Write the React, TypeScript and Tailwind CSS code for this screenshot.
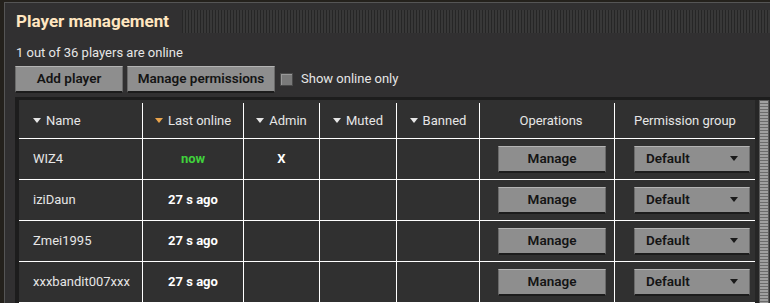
import React from "react";

const rows = [
  { name: "WIZ4", last: "now", admin: true },
  { name: "iziDaun", last: "27 s ago", admin: false },
  { name: "Zmei1995", last: "27 s ago", admin: false },
  { name: "xxxbandit007xxx", last: "27 s ago", admin: false },
];

const Tri = ({ color = "#e6e6e6" }: { color?: string }) => (
  <svg width="8" height="5" viewBox="0 0 8 5" className="shrink-0">
    <path d="M0 0H8L4 5Z" fill={color} />
  </svg>
);

const GrayBtn = ({ children, className = "" }: { children: React.ReactNode; className?: string }) => (
  <div
    className={
      "h-[27px] flex items-center bg-[#8e8e8e] border-t border-t-[#b4b4b4] border-b-2 border-b-[#1c1c1c] border-x border-x-[#6a6a6a] text-[#141414] font-semibold text-[13.5px] " +
      className
    }
  >
    {children}
  </div>
);

export default function App() {
  return (
    <div
      className="w-[770px] h-[303px] overflow-hidden bg-[#24211c] pt-[2px] pl-[4px]"
      style={{ fontFamily: "Roboto, 'Noto Sans', sans-serif" }}
    >
      <div className="h-[310px] bg-[#313031] border-t border-l border-[#555] pl-[10px]">
        {/* title bar */}
        <div className="flex items-center h-[23px] mt-[7px]">
          <div className="text-[17px] font-bold text-[#ffe6c0] pl-[1px] leading-none">Player management</div>
          <div className="flex-1 h-[23px] ml-[13px] bg-[repeating-linear-gradient(90deg,#262626_0px,#262626_1px,#383838_1px,#383838_3px)]" />
        </div>

        <div className="mt-[11px] text-[13px] text-[#e6e6e6] leading-[17px] pl-[1px]">1 out of 36 players are online</div>

        {/* toolbar */}
        <div className="flex items-center mt-[5px] h-[26px]">
          <GrayBtn className="w-[108px] justify-center h-[26px]">Add player</GrayBtn>
          <GrayBtn className="w-[148px] justify-center h-[26px] ml-[4px]">Manage permissions</GrayBtn>
          <div className="w-[13px] h-[13px] ml-[5px] bg-[#7a7a7a] border border-[#4a4a4a] shadow-[inset_1px_1px_0_#999]" />
          <span className="ml-[8px] text-[13px] text-[#e6e6e6]">Show online only</span>
        </div>

        {/* table */}
        <div className="mt-[5px] flex border-t-[3px] border-l-[4px] border-[#1d1d1d] bg-[#303030]">
          <div className="w-[736px] pt-[3px]">
            <div className="grid grid-cols-[124px_101px_76px_77px_83px_135px_140px] text-[13px] text-[#e6e6e6]">
              <div className="h-[36px] border-r border-b border-white flex items-center gap-[5px] pl-[14px]">
                <Tri /> Name
              </div>
              <div className="h-[36px] border-r border-b border-white flex items-center justify-center gap-[5px]">
                <Tri color="#e9a44c" /> Last online
              </div>
              <div className="h-[36px] border-r border-b border-white flex items-center justify-center gap-[5px]">
                <Tri /> Admin
              </div>
              <div className="h-[36px] border-r border-b border-white flex items-center justify-center gap-[5px]">
                <Tri /> Muted
              </div>
              <div className="h-[36px] border-r border-b border-white flex items-center justify-center gap-[5px]">
                <Tri /> Banned
              </div>
              <div className="h-[36px] border-r border-b border-white flex items-center justify-center pl-[8px]">Operations</div>
              <div className="h-[36px] border-b border-white flex items-center justify-center">Permission group</div>

              {rows.map((r) => (
                <React.Fragment key={r.name}>
                  <div className="h-[41px] border-r border-b border-white flex items-center pl-[14px]">{r.name}</div>
                  <div
                    className={
                      "h-[41px] border-r border-b border-white flex items-center justify-center font-bold " +
                      (r.last == "now" ? "text-[#40d23c]" : "text-white")
                    }
                  >
                    {r.last}
                  </div>
                  <div className="h-[41px] border-r border-b border-white flex items-center justify-center font-bold text-white">
                    {r.admin ? "X" : ""}
                  </div>
                  <div className="h-[41px] border-r border-b border-white" />
                  <div className="h-[41px] border-r border-b border-white" />
                  <div className="h-[41px] border-r border-b border-white flex items-center pl-[18px]">
                    <GrayBtn className="w-[108px] justify-center">Manage</GrayBtn>
                  </div>
                  <div className="h-[41px] border-b border-white flex items-center pl-[19px]">
                    <GrayBtn className="w-[116px] justify-between pl-[11px] pr-[11px]">
                      <span>Default</span>
                      <Tri color="#1a1a1a" />
                    </GrayBtn>
                  </div>
                </React.Fragment>
              ))}
            </div>
          </div>
          <div className="w-[4px] bg-[#262626]" />
          <div className="w-[10px] h-[220px] border border-[#5a5a5a] bg-[repeating-linear-gradient(180deg,#a0a0a0_0px,#a0a0a0_2px,#6c6c6c_2px,#6c6c6c_3px)]" />
        </div>
      </div>
    </div>
  );
}
